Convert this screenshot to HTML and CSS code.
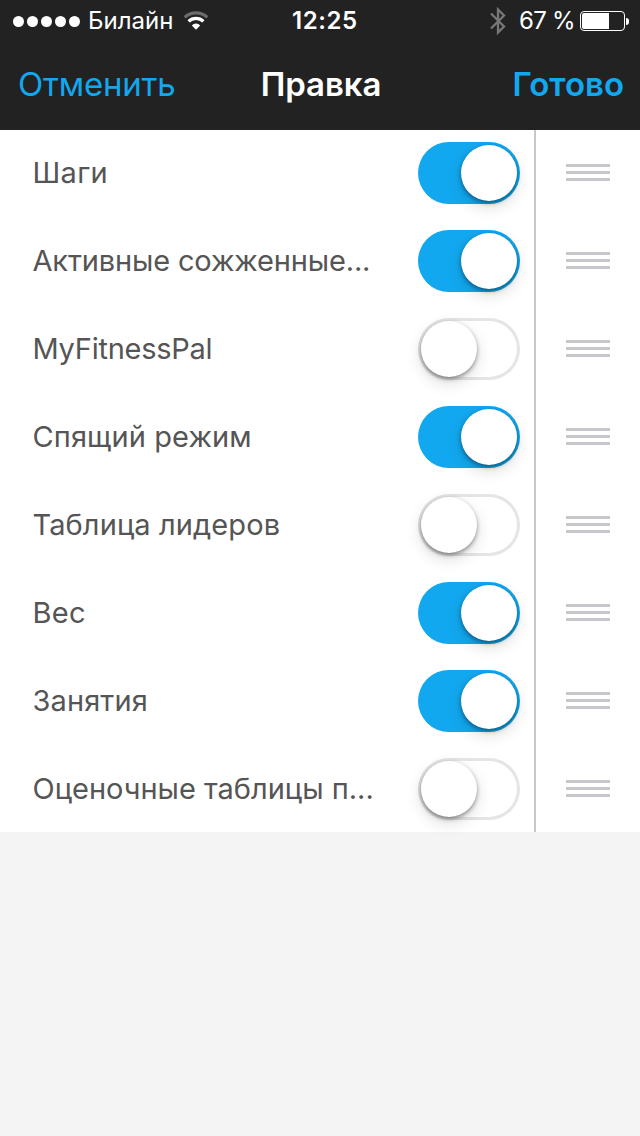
FILE: index.html
```
<!DOCTYPE html>
<html lang="ru">
<head>
  <meta charset="UTF-8">
  <meta name="viewport" content="width=device-width, initial-scale=1">
  <title>Правка</title>
  <link rel="stylesheet" href="styles.css">
</head>
<body>
  <header class="header">
    <!-- Status Bar -->
    <div class="status-bar">
      <div class="status-left">
        <div class="signal"><i></i><i></i><i></i><i></i><i></i></div>
        <span class="carrier">Билайн</span>
        <svg class="wifi" width="26" height="20" viewBox="0 0 26 20">
          <path d="M1.7 6.3A16.4 16.4 0 0 1 24.3 6.3" fill="none" stroke="#6b6b6b" stroke-width="3.2"/>
          <path d="M5.6 10.4A10.6 10.6 0 0 1 20.4 10.4" fill="none" stroke="#fff" stroke-width="3.4"/>
          <path d="M8.8 14.4A5.8 5.8 0 0 1 17.2 14.4L13 18.8Z" fill="#fff"/>
        </svg>
      </div>
      <span class="time">12:25</span>
      <div class="status-right">
        <svg class="bluetooth" width="16" height="28" viewBox="0 0 16 28">
          <path d="M1 6.5L14 19.5L8 25.5V2.5L14 8.5L1 21.5" fill="none" stroke="#777" stroke-width="2.3"/>
        </svg>
        <span class="percent">67 %</span>
        <div class="battery"><div class="battery-level"></div></div>
        <div class="battery-cap"></div>
      </div>
    </div>

    <!-- Navigation Bar -->
    <nav class="navbar">
      <a class="cancel-btn">Отменить</a>
      <h1>Правка</h1>
      <a class="done-btn">Готово</a>
    </nav>
  </header>

  <!-- Tile list -->
  <ul class="list">
    <li>
      <span class="label steps">Шаги</span>
      <div class="toggle on"></div>
      <div class="handle"><i></i><i></i><i></i></div>
    </li>
    <li>
      <span class="label calories">Активные сожженные...</span>
      <div class="toggle on"></div>
      <div class="handle"><i></i><i></i><i></i></div>
    </li>
    <li>
      <span class="label fitness">MyFitnessPal</span>
      <div class="toggle"></div>
      <div class="handle"><i></i><i></i><i></i></div>
    </li>
    <li>
      <span class="label sleep">Спящий режим</span>
      <div class="toggle on"></div>
      <div class="handle"><i></i><i></i><i></i></div>
    </li>
    <li>
      <span class="label leaders">Таблица лидеров</span>
      <div class="toggle"></div>
      <div class="handle"><i></i><i></i><i></i></div>
    </li>
    <li>
      <span class="label weight">Вес</span>
      <div class="toggle on"></div>
      <div class="handle"><i></i><i></i><i></i></div>
    </li>
    <li>
      <span class="label workouts">Занятия</span>
      <div class="toggle on"></div>
      <div class="handle"><i></i><i></i><i></i></div>
    </li>
    <li>
      <span class="label scores">Оценочные таблицы п...</span>
      <div class="toggle"></div>
      <div class="handle"><i></i><i></i><i></i></div>
    </li>
  </ul>
</body>
</html>
```
FILE: styles.css
```
* {
  margin: 0;
  padding: 0;
  box-sizing: border-box;
}
body {
  font-family: Inter, "Liberation Sans", sans-serif;
  background-color: #f4f4f4;
  color: #555;
  min-height: 1136px;
}
/* Header */
.header {
  position: relative;
  z-index: 1;
  height: 130px;
  background-color: #222;
  color: #fff;
}
.status-bar {
  display: grid;
  grid-template-columns: 279px 1fr 150px;
  align-items: center;
  height: 40px;
  padding: 1px 11px 0 13px;
  font-size: 24px;
  line-height: 40px;
}
.status-left, .status-right {
  display: flex;
  align-items: center;
}
.status-right {
  justify-content: flex-end;
}
.signal {
  display: flex;
  gap: 3px;
}
.signal i {
  width: 11px;
  height: 11px;
  border-radius: 50%;
  background-color: #fff;
}
.carrier {
  width: 85px;
  margin-left: 8px;
  white-space: nowrap;
}
.wifi {
  margin-left: 10px;
}
.time {
  font-weight: 600;
  letter-spacing: 0.6px;
}
.percent {
  width: 61px;
  margin-left: 13px;
  letter-spacing: -0.7px;
  white-space: nowrap;
}
/* Battery */
.battery {
  width: 45px;
  height: 20px;
  padding: 1px;
  border: 1px solid #fff;
  border-radius: 4px;
}
.battery-level {
  width: 27px;
  height: 16px;
  border-radius: 2px 0 0 2px;
  background-color: #fff;
}
.battery-cap {
  width: 3px;
  height: 7px;
  margin-left: 1px;
  border-radius: 0 3px 3px 0;
  background-color: #fff;
}
/* Navigation Bar */
.navbar {
  display: grid;
  grid-template-columns: 1fr auto 1fr;
  align-items: center;
  height: 88px;
  padding: 0 16px 0 18px;
  font-size: 33px;
  line-height: 88px;
}
.navbar h1 {
  font-size: 33px;
  font-weight: 600;
  letter-spacing: -0.1px;
}
.navbar a {
  color: #12a8ef;
}
.navbar .cancel-btn {
  letter-spacing: -0.2px;
}
.navbar .done-btn {
  font-weight: 600;
  text-align: right;
}
/* List, the first row starts under the header edge */
.list {
  list-style: none;
  margin-top: -2px;
  background-color: #fff;
}
.list li {
  display: flex;
  align-items: center;
  height: 88px;
}
.label {
  width: 385.5px;
  margin-left: 32.5px;
  font-size: 29px;
  letter-spacing: 0.1px;
  white-space: nowrap;
}
.label.steps {
  letter-spacing: 0.3px;
}
.label.calories {
  letter-spacing: -0.15px;
}
.label.fitness {
  letter-spacing: -0.25px;
}
.label.weight {
  letter-spacing: 0.3px;
}
.label.scores {
  letter-spacing: 0;
}
/* Toggle */
.toggle {
  width: 102px;
  height: 62px;
  margin-top: 2px;
  padding: 3px;
  border-radius: 31px;
  box-shadow: inset 0 0 0 3px #e5e5e5;
}
.toggle::before {
  content: "";
  display: block;
  width: 56px;
  height: 56px;
  border-radius: 50%;
  background-color: #fff;
  box-shadow: 0 2px 4px rgba(0,0,0,0.4), 0 6px 16px rgba(0,0,0,0.14);
}
.toggle.on {
  background-color: #12a8ef;
  box-shadow: none;
}
.toggle.on::before {
  margin-left: 40px;
}
/* Drag handle */
.handle {
  display: flex;
  flex-direction: column;
  justify-content: center;
  gap: 4px;
  width: 106px;
  height: 88px;
  margin-left: 14px;
  padding: 1px 0 0 30px;
  border-left: 2px solid #c7c7cc;
}
.handle i {
  width: 44px;
  height: 3px;
  background-color: #c7c7cc;
}
```
